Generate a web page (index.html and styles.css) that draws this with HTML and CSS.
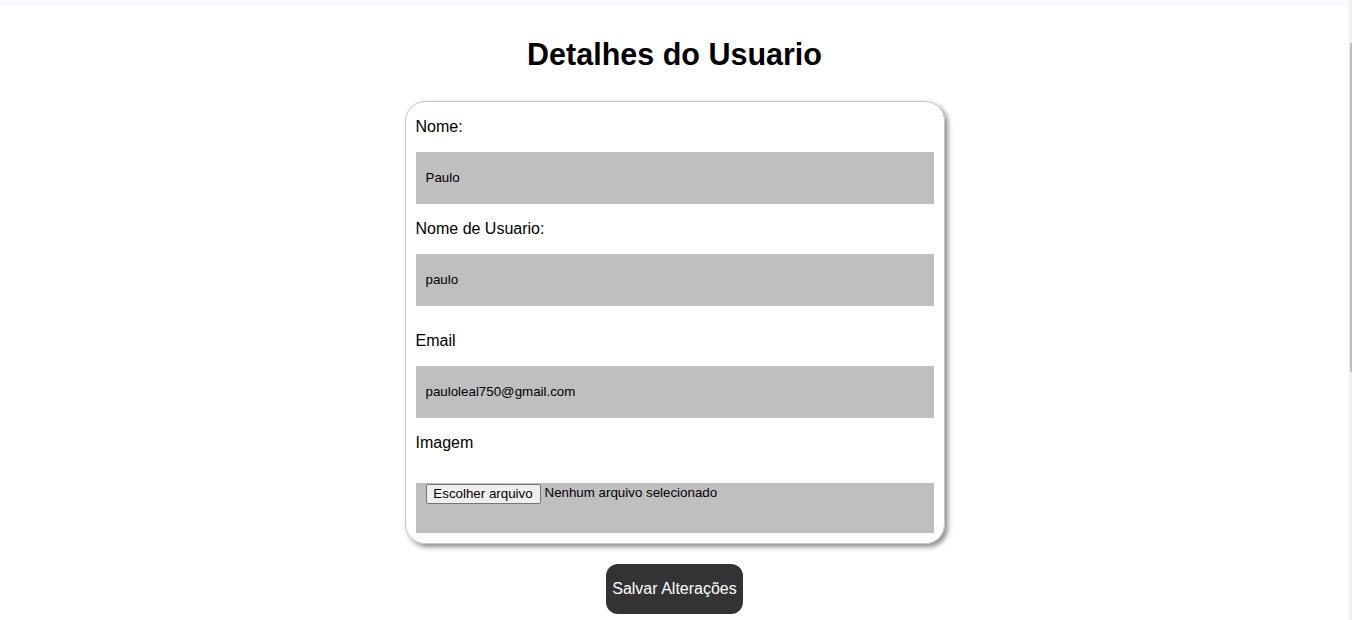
FILE: index.html
```html
<!DOCTYPE html>
<html lang="pt-BR">
<head>
<meta charset="utf-8">
<title>Detalhes do Usuario</title>
<link rel="stylesheet" href="styles.css">
</head>
<body>
<div class="page">
  <div class="topbar"></div>
  <main class="content">
    <h1 class="title">Detalhes do Usuario</h1>
    <form class="card">
      <label class="field-label" for="nome">Nome:</label>
      <input class="field-input" id="nome" type="text" value="Paulo">
      <label class="field-label" for="usuario">Nome de Usuario:</label>
      <input class="field-input" id="usuario" type="text" value="paulo">
      <label class="field-label field-label--spaced" for="email">Email</label>
      <input class="field-input" id="email" type="text" value="pauloleal750@gmail.com">
      <label class="field-label" for="imagem">Imagem</label>
      <div class="file-box">
        <span class="file-button">Escolher arquivo</span>
        <span class="file-status">Nenhum arquivo selecionado</span>
      </div>
    </form>
    <button class="save-button" type="button">Salvar Alterações</button>
  </main>
</div>
<div class="scrollbar"><div class="scrollbar-thumb"></div></div>
</body>
</html>
```

FILE: styles.css
```css
html, body {
  margin: 0;
  padding: 0;
  height: 100%;
  overflow: hidden;
  background: #ffffff;
  font-family: "Liberation Sans", Arial, sans-serif;
  color: #000;
}

.page {
  width: 1349px;
}

.topbar {
  height: 6px;
  background: #f8f9fe;
}

.content {
  display: flex;
  flex-direction: column;
  align-items: center;
}

.title {
  margin: 31px 0 29px;
  font-size: 30.5px;
  font-weight: bold;
  line-height: 35px;
  text-align: center;
}

.card {
  box-sizing: border-box;
  width: 540px;
  padding: 15px 10px 10px;
  border: 1px solid #c6c6c6;
  border-radius: 20px;
  box-shadow: 3px 3px 5px rgba(0, 0, 0, 0.45);
  display: flex;
  flex-direction: column;
}

.field-label {
  display: block;
  font-size: 16px;
  line-height: 18px;
  padding-top: 1px;
  margin-top: 15px;
}

.field-label:first-child {
  margin-top: 0;
}

.field-label--spaced {
  margin-top: 25px;
}

.field-input {
  box-sizing: border-box;
  width: 100%;
  height: 52px;
  margin: 16px 0 0;
  padding: 0 10px 1px;
  border: none;
  outline: none;
  background: #bfbfbf;
  font-family: "Liberation Sans", Arial, sans-serif;
  font-size: 13.33px;
  color: #000;
}

.file-box {
  box-sizing: border-box;
  height: 50px;
  margin-top: 31px;
  padding: 1px 10px 0;
  background: #bfbfbf;
  display: flex;
  align-items: flex-start;
  gap: 4px;
  font-size: 13.33px;
}

.file-button {
  box-sizing: border-box;
  height: 20px;
  width: 115px;
  padding: 0 6px;
  border: 1px solid #767676;
  border-radius: 2px;
  background: #efefef;
  line-height: 18px;
  text-align: center;
}

.file-status {
  line-height: 18px;
}

.save-button {
  margin: 20px 0 0;
  height: 50px;
  padding: 0 6px;
  border: none;
  border-radius: 12px;
  background: #333333;
  color: #ffffff;
  font-family: "Liberation Sans", Arial, sans-serif;
  font-size: 16px;
}

.scrollbar {
  position: fixed;
  top: 0;
  right: 0;
  width: 3px;
  height: 100%;
  background: #f0f0f0;
}

.scrollbar-thumb {
  position: absolute;
  top: 43px;
  right: 0;
  width: 2px;
  height: 329px;
  background: #bdbdbd;
}
```
